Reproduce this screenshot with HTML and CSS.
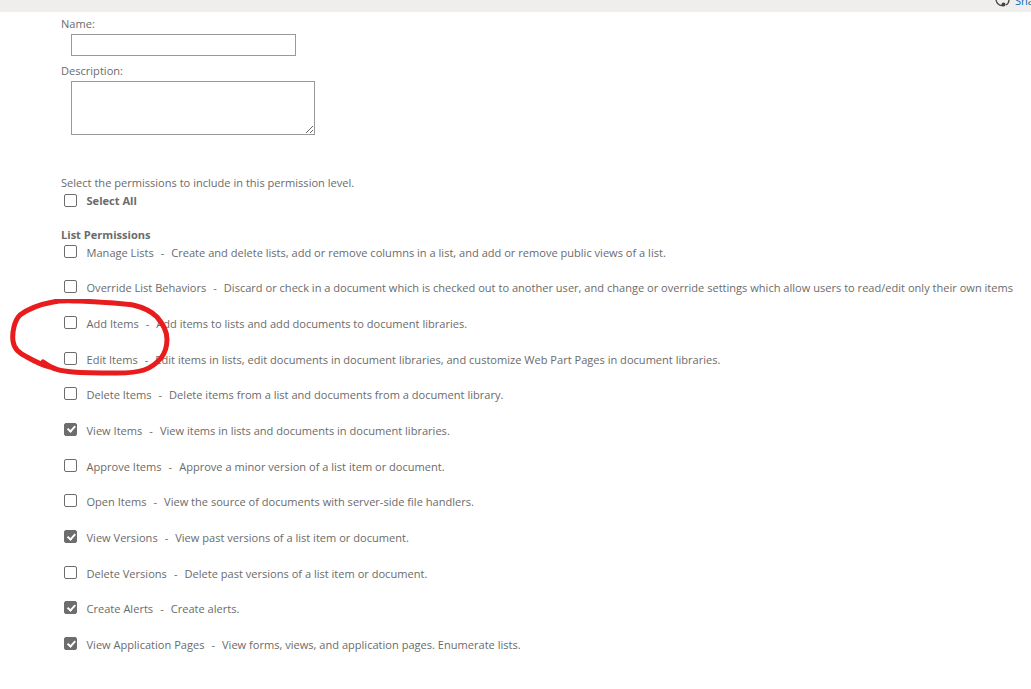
FILE: index.html
```html
<!DOCTYPE html>
<html lang="en">
<head>
    <meta charset="UTF-8">
    <title>Edit Permission Level</title>
    <link rel="stylesheet" href="styles.css">
</head>
<body>
    <div class="topbar">
        <div class="share">
            <svg class="share-icon" width="18" height="12" viewBox="0 0 18 12"><path d="M2 0a6.5 6.5 0 0 0 7 5.5M12 5a6 6 0 0 0 3-5" fill="none" stroke="#444" stroke-width="1.3"/><circle cx="9.5" cy="4.5" r="2" fill="#444"/></svg>
            <span>Share</span>
        </div>
    </div>
    <div class="content">
        <div class="label">Name:</div>
        <input class="name-input" type="text">
        <div class="label desc-label">Description:</div>
        <textarea class="desc-input"></textarea>

        <div class="intro">Select the permissions to include in this permission level.</div>
        <label class="select-all"><input type="checkbox"><b>Select All</b></label>

        <div class="group-title">List Permissions</div>
        <div class="perms">
            <label class="perm"><input type="checkbox"><span>Manage Lists</span><span class="sep">-</span><span>Create and delete lists, add or remove columns in a list, and add or remove public views of a list.</span></label>
            <label class="perm"><input type="checkbox"><span>Override List Behaviors</span><span class="sep">-</span><span>Discard or check in a document which is checked out to another user, and change or override settings which allow users to read/edit only their own items</span></label>
            <label class="perm"><input type="checkbox"><span>Add Items</span><span class="sep">-</span><span>Add items to lists and add documents to document libraries.</span></label>
            <label class="perm"><input type="checkbox"><span>Edit Items</span><span class="sep">-</span><span>Edit items in lists, edit documents in document libraries, and customize Web Part Pages in document libraries.</span></label>
            <label class="perm"><input type="checkbox"><span>Delete Items</span><span class="sep">-</span><span>Delete items from a list and documents from a document library.</span></label>
            <label class="perm"><input type="checkbox" checked><span>View Items</span><span class="sep">-</span><span>View items in lists and documents in document libraries.</span></label>
            <label class="perm"><input type="checkbox"><span>Approve Items</span><span class="sep">-</span><span>Approve a minor version of a list item or document.</span></label>
            <label class="perm"><input type="checkbox"><span>Open Items</span><span class="sep">-</span><span>View the source of documents with server-side file handlers.</span></label>
            <label class="perm"><input type="checkbox" checked><span>View Versions</span><span class="sep">-</span><span>View past versions of a list item or document.</span></label>
            <label class="perm"><input type="checkbox"><span>Delete Versions</span><span class="sep">-</span><span>Delete past versions of a list item or document.</span></label>
            <label class="perm"><input type="checkbox" checked><span>Create Alerts</span><span class="sep">-</span><span>Create alerts.</span></label>
            <label class="perm"><input type="checkbox" checked><span>View Application Pages</span><span class="sep">-</span><span>View forms, views, and application pages. Enumerate lists.</span></label>
        </div>
    </div>
    <!-- red marker drawn over the screenshot -->
    <svg class="scribble" width="180" height="90" viewBox="0 0 180 90">
        <path d="M50 68 C42 66 34 62 27 58 C19 54 14 50 13 42 C12 34 14 22 20 16 C28 10 42 5 53 3 C62 1 72 2 80 2 C100 3 120 4 133 6 C146 9 152 13 157 18 C163 25 167 32 167 40 C167 48 165 54 161 59 C156 65 150 69 144 71 C135 74 125 74 117 74 C100 74 85 74 73 73 C62 72 53 71 43 63" fill="none" stroke="#e81c1c" stroke-width="5" stroke-linecap="round" stroke-linejoin="round"/>
    </svg>
</body>
</html>
```

FILE: styles.css
```css
*, *::after, *::before {
    box-sizing: border-box;
}
html, body {
    height: 100%;
}
body {
    margin: 0;
    position: relative;
    overflow: hidden;
    background-color: white;
    font-family: "Open Sans", "Liberation Sans", sans-serif;
    font-size: 11.07px;
    color: #6b6b6b;
}
.topbar {
    height: 12px;
    background-color: #efeeec;
    display: flex;
    overflow: hidden;
}
.share {
    display: flex;
    gap: 3px;
    margin-left: 994px;
    white-space: nowrap;
    line-height: 12px;
    margin-top: -5px;
    color: #0a6cb8;
}
.share-icon {
    flex: none;
    margin-top: 5px;
}
.content {
    padding: 3px 0 0 61px;
}
.label {
    height: 17px;
    line-height: 17px;
}
.desc-label {
    margin-top: 6px;
}
.name-input {
    display: block;
    margin: 2px 0 0 10px;
    width: 225px;
    height: 22px;
    border: 1px solid #999;
    background: white;
}
.desc-input {
    display: block;
    margin: 2px 0 0 10px;
    width: 244px;
    height: 54px;
    border: 1px solid #999;
    background: white;
}
.intro {
    margin-top: 39px;
    height: 17px;
    line-height: 17px;
}
.select-all {
    display: flex;
    align-items: center;
    height: 18px;
    margin: 0 0 0 3px;
}
.group-title {
    margin-top: 17px;
    height: 17px;
    line-height: 17px;
    font-weight: 700;
}
.perms {
    display: flex;
    flex-direction: column;
}
.perm {
    display: flex;
    align-items: center;
    height: 18px;
    margin: 0 0 17.7px 3px;
    white-space: nowrap;
}
input[type="checkbox"] {
    appearance: none;
    flex: none;
    position: relative;
    width: 13px;
    height: 13px;
    margin: 0 9.5px 0 0;
    border: 1px solid #6d6d6d;
    border-radius: 2px;
    background: white;
}
.perm input[type="checkbox"] {
    margin-bottom: 2px;
}
input[type="checkbox"]:checked {
    background: #6d6d6d;
}
input[type="checkbox"]:checked::after {
    content: '';
    position: absolute;
    left: 3.5px;
    top: 0.5px;
    width: 4.5px;
    height: 8px;
    border: solid white;
    border-width: 0 2.2px 2.2px 0;
    transform: rotate(42deg);
}
.sep {
    margin: 0 7px;
}
.scribble {
    position: absolute;
    left: 0;
    top: 299px;
}
```
